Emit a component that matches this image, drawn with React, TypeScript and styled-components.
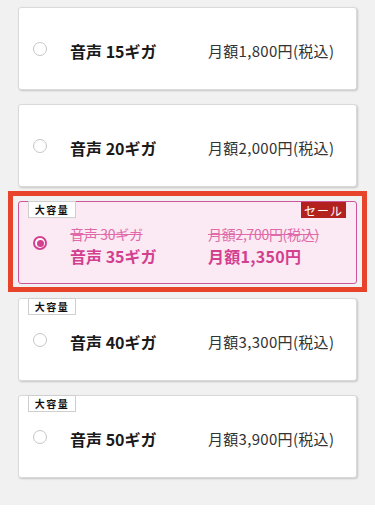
import styled, { createGlobalStyle } from "styled-components";

const GlobalStyle = createGlobalStyle`
  body {
    margin: 0;
    background: #ffffff;
    font-family: "Noto Sans CJK JP", "Noto Sans", sans-serif;
    color: #222;
  }
`;

const plans = [
  { id: 15, price: "1,800", big: false },
  { id: 20, price: "2,000", big: false },
  { id: 35, price: "1,350", big: true, sale: true, was: 30, wasPrice: "2,700" },
  { id: 40, price: "3,300", big: true },
  { id: 50, price: "3,900", big: true },
];

const Page = styled.div`
  background: #f1f1f1;
  padding: 7px 18px 27px 18px;
`;

const List = styled.div`
  display: flex;
  flex-direction: column;
  gap: 14px;
`;

const Card = styled.label<{ $active?: boolean }>`
  position: relative;
  height: 83px;
  box-sizing: border-box;
  display: flex;
  align-items: center;
  padding: 5px 0 0 14px;
  border-radius: 3px;
  background: ${(p) => (p.$active ? "#fbe9f3" : "#ffffff")};
  border: 1px solid ${(p) => (p.$active ? "#cf5499" : "#d9d9d9")};
  box-shadow: ${(p) => (p.$active ? "none" : "1px 1px 2px rgba(0, 0, 0, 0.18)")};

  /* red highlight frame around the chosen plan */
  &::before {
    content: "";
    display: ${(p) => (p.$active ? "block" : "none")};
    position: absolute;
    top: -11px;
    left: -11px;
    right: -11px;
    bottom: -9px;
    border: 5px solid #e8432b;
    pointer-events: none;
  }
`;

const Radio = styled.span<{ $checked?: boolean }>`
  width: 14px;
  height: 14px;
  box-sizing: border-box;
  border-radius: 50%;
  flex-shrink: 0;
  margin-right: 23px;
  margin-top: -4px;
  background: #fff;
  border: ${(p) => (p.$checked ? "2px solid #d2408f" : "1px solid #c6c6c6")};
  display: flex;
  align-items: center;
  justify-content: center;
  &::after {
    content: "";
    display: ${(p) => (p.$checked ? "block" : "none")};
    width: 7px;
    height: 7px;
    border-radius: 50%;
    background: #d2408f;
  }
`;

const Col = styled.div<{ $w?: number }>`
  width: ${(p) => (p.$w ? `${p.$w}px` : "auto")};
  display: flex;
  flex-direction: column;
  flex-shrink: 0;
`;

const Name = styled.div<{ $active?: boolean }>`
  font-size: 16px;
  font-weight: 700;
  line-height: 20px;
  color: ${(p) => (p.$active ? "#d2408f" : "#1a1a1a")};
`;

const Price = styled.div<{ $active?: boolean }>`
  font-size: ${(p) => (p.$active ? "16px" : "15px")};
  font-weight: ${(p) => (p.$active ? 700 : 400)};
  line-height: 20px;
  letter-spacing: 0.3px;
  color: ${(p) => (p.$active ? "#d2408f" : "#333")};
`;

const Old = styled.div`
  font-size: 14px;
  line-height: 18px;
  margin-bottom: 3px;
  letter-spacing: -0.3px;
  color: #e06aa9;
  text-decoration: line-through;
`;

const Badge = styled.span`
  position: absolute;
  top: -1px;
  left: 9px;
  width: 48px;
  height: 17px;
  box-sizing: border-box;
  border: 1px solid #cfcfcf;
  background: #fff;
  font-size: 10px;
  font-weight: 700;
  letter-spacing: 1.5px;
  color: #111;
  display: flex;
  align-items: center;
  justify-content: center;
`;

const Sale = styled.span`
  position: absolute;
  top: 0;
  right: 10px;
  width: 45px;
  height: 16px;
  background: #b3211e;
  color: #fff;
  font-size: 12px;
  letter-spacing: 1px;
  display: flex;
  align-items: center;
  justify-content: center;
`;

const Footer = styled.div`
  height: 11px;
  background: #fff;
`;

export default function App() {
  return (
    <>
      <GlobalStyle />
      <Page>
        <List>
          {plans.map((p) => (
            <Card key={p.id} $active={p.sale}>
              {p.big && <Badge>大容量</Badge>}
              {p.sale && <Sale>セール</Sale>}
              <Radio $checked={p.sale} />
              <Col $w={138}>
                {p.sale && <Old>音声 {p.was}ギガ</Old>}
                <Name $active={p.sale}>音声 {p.id}ギガ</Name>
              </Col>
              <Col>
                {p.sale && <Old>月額{p.wasPrice}円(税込)</Old>}
                <Price $active={p.sale}>
                  月額{p.price}円{p.sale ? "" : "(税込)"}
                </Price>
              </Col>
            </Card>
          ))}
        </List>
      </Page>
      <Footer />
    </>
  );
}
